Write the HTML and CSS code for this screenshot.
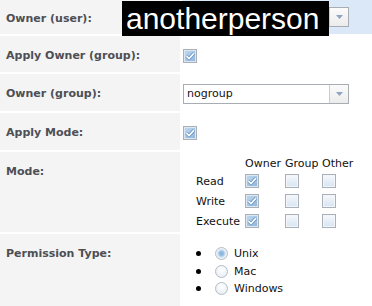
FILE: index.html
```html
<!DOCTYPE html>
<html>
<head>
<meta charset="utf-8">
<link rel="stylesheet" href="styles.css">
</head>
<body>
<div class="form">
  <div class="label label-first">Owner (user):</div>
  <div class="field field-hl">
    <div class="select select-top">
      <span class="select-value"></span>
      <span class="select-btn"><svg width="7" height="4" viewBox="0 0 7 4"><path d="M0 0H7L3.5 4Z" fill="#8ea3c2"/></svg></span>
    </div>
  </div>

  <div class="label">Apply Owner (group):</div>
  <div class="field field-cb">
    <span class="cb on"><svg width="12" height="12" viewBox="0 0 12 12"><path d="M2.5 6.2L5 8.6L9.8 3.4" fill="none" stroke="#5f8fc2" stroke-width="3.2" stroke-linejoin="round"/><path d="M2.5 6.2L5 8.6L9.8 3.4" fill="none" stroke="#fff" stroke-width="1.6"/></svg></span>
  </div>

  <div class="label">Owner (group):</div>
  <div class="field">
    <div class="select">
      <span class="select-value">nogroup</span>
      <span class="select-btn"><svg width="7" height="4" viewBox="0 0 7 4"><path d="M0 0H7L3.5 4Z" fill="#8ea3c2"/></svg></span>
    </div>
  </div>

  <div class="label">Apply Mode:</div>
  <div class="field field-cb">
    <span class="cb on"><svg width="12" height="12" viewBox="0 0 12 12"><path d="M2.5 6.2L5 8.6L9.8 3.4" fill="none" stroke="#5f8fc2" stroke-width="3.2" stroke-linejoin="round"/><path d="M2.5 6.2L5 8.6L9.8 3.4" fill="none" stroke="#fff" stroke-width="1.6"/></svg></span>
  </div>

  <div class="label">Mode:</div>
  <div class="field">
    <div class="mode">
      <span></span><span class="mh">Owner</span><span class="mh">Group</span><span class="mh">Other</span>
      <span class="ml">Read</span>
      <span class="mc"><span class="cb on"><svg width="12" height="12" viewBox="0 0 12 12"><path d="M2.5 6.2L5 8.6L9.8 3.4" fill="none" stroke="#5f8fc2" stroke-width="3.2" stroke-linejoin="round"/><path d="M2.5 6.2L5 8.6L9.8 3.4" fill="none" stroke="#fff" stroke-width="1.6"/></svg></span></span>
      <span class="mc"><span class="cb"></span></span>
      <span class="mc oth"><span class="cb"></span></span>
      <span class="ml">Write</span>
      <span class="mc"><span class="cb on"><svg width="12" height="12" viewBox="0 0 12 12"><path d="M2.5 6.2L5 8.6L9.8 3.4" fill="none" stroke="#5f8fc2" stroke-width="3.2" stroke-linejoin="round"/><path d="M2.5 6.2L5 8.6L9.8 3.4" fill="none" stroke="#fff" stroke-width="1.6"/></svg></span></span>
      <span class="mc"><span class="cb"></span></span>
      <span class="mc oth"><span class="cb"></span></span>
      <span class="ml">Execute</span>
      <span class="mc"><span class="cb on"><svg width="12" height="12" viewBox="0 0 12 12"><path d="M2.5 6.2L5 8.6L9.8 3.4" fill="none" stroke="#5f8fc2" stroke-width="3.2" stroke-linejoin="round"/><path d="M2.5 6.2L5 8.6L9.8 3.4" fill="none" stroke="#fff" stroke-width="1.6"/></svg></span></span>
      <span class="mc"><span class="cb"></span></span>
      <span class="mc oth"><span class="cb"></span></span>
    </div>
  </div>

  <div class="label">Permission Type:</div>
  <div class="field">
    <ul class="radios">
      <li><span class="dot"></span><span class="radio on"></span><span class="rl">Unix</span></li>
      <li><span class="dot"></span><span class="radio"></span><span class="rl">Mac</span></li>
      <li><span class="dot"></span><span class="radio"></span><span class="rl">Windows</span></li>
    </ul>
  </div>
</div>
<div class="redact">anotherperson</div>
</body>
</html>
```

FILE: styles.css
```css
html, body {
  margin: 0;
  padding: 0;
  background: #ffffff;
  overflow: hidden;
}
body {
  font-family: "DejaVu Sans", Verdana, sans-serif;
  font-size: 11px;
  color: #1a1a1a;
  position: relative;
  height: 306px;
}
.form {
  display: grid;
  grid-template-columns: 180px 1fr;
  grid-template-rows: 37px 36px 37px 37px 80px 80px;
  column-gap: 2px;
  row-gap: 2px;
  margin-top: -3px;
}
.label {
  background: #f4f4f4;
  font-weight: bold;
  color: #4d4f54;
  padding: 13px 0 0 6px;
  line-height: 13px;
}
.label-first {
  padding-top: 15px;
}
.field {
  padding-left: 1px;
}
.field-hl {
  background: #dbe8f7;
}
.field-cb {
  padding-top: 13px;
}
.select {
  margin-top: 10px;
  width: 166px;
  height: 20px;
  box-sizing: border-box;
  border: 1px solid #a7adb3;
  background: #fff;
  display: flex;
}
.select-value {
  flex: 1;
  padding-left: 3px;
  line-height: 18px;
  color: #111;
}
.select-btn {
  width: 18px;
  border-left: 1px solid #c9ccd0;
  background: linear-gradient(#fbfbfb, #ececec);
  display: flex;
  align-items: center;
  justify-content: center;
}
.cb {
  display: block;
  width: 14px;
  height: 14px;
  box-sizing: border-box;
  border: 1px solid #a9b0b7;
  background: linear-gradient(#f7f9fc, #d6e4f1);
  box-shadow: inset 0 0 0 1px #f2f5f9;
}
.cb.on {
  background: linear-gradient(135deg, #c4daee, #8db4db);
  box-shadow: inset 0 0 0 1px #dbe7f3;
}
.cb svg {
  display: block;
}
.mode {
  margin: 5px 0 0 13px;
  display: grid;
  grid-template-columns: 49px 40px 37px 40px;
  grid-template-rows: 14px 20px 20px 20px;
  line-height: 13px;
  color: #111;
}
.mh {
  align-self: start;
}
.ml {
  align-self: center;
}
.mc {
  align-self: center;
}
.radios {
  list-style: none;
  margin: 0;
  padding: 11px 0 0 13px;
}
.radios li {
  display: flex;
  align-items: center;
  height: 17.5px;
}
.dot {
  width: 5px;
  height: 5px;
  border-radius: 50%;
  background: #000;
  margin-right: 14px;
}
.radio {
  width: 13px;
  height: 13px;
  box-sizing: border-box;
  border-radius: 50%;
  border: 1px solid #b4bcc5;
  background: radial-gradient(circle at 50% 35%, #ffffff, #e3eaf2);
  margin-right: 6px;
  position: relative;
}
.radio.on {
  background: radial-gradient(circle, #7fb0dd 0, #9cc3e6 2.5px, #cfdff0 3.5px, #eef3f8 5px);
}
.rl {
  color: #111;
  line-height: 13px;
}
.redact {
  position: absolute;
  left: 122px;
  top: 1px;
  width: 207px;
  height: 35px;
  box-sizing: border-box;
  background: #000;
  color: #fff;
  font-family: "Liberation Sans", Arial, sans-serif;
  font-size: 30px;
  line-height: 35px;
  padding-left: 4px;
  white-space: nowrap;
}
```
